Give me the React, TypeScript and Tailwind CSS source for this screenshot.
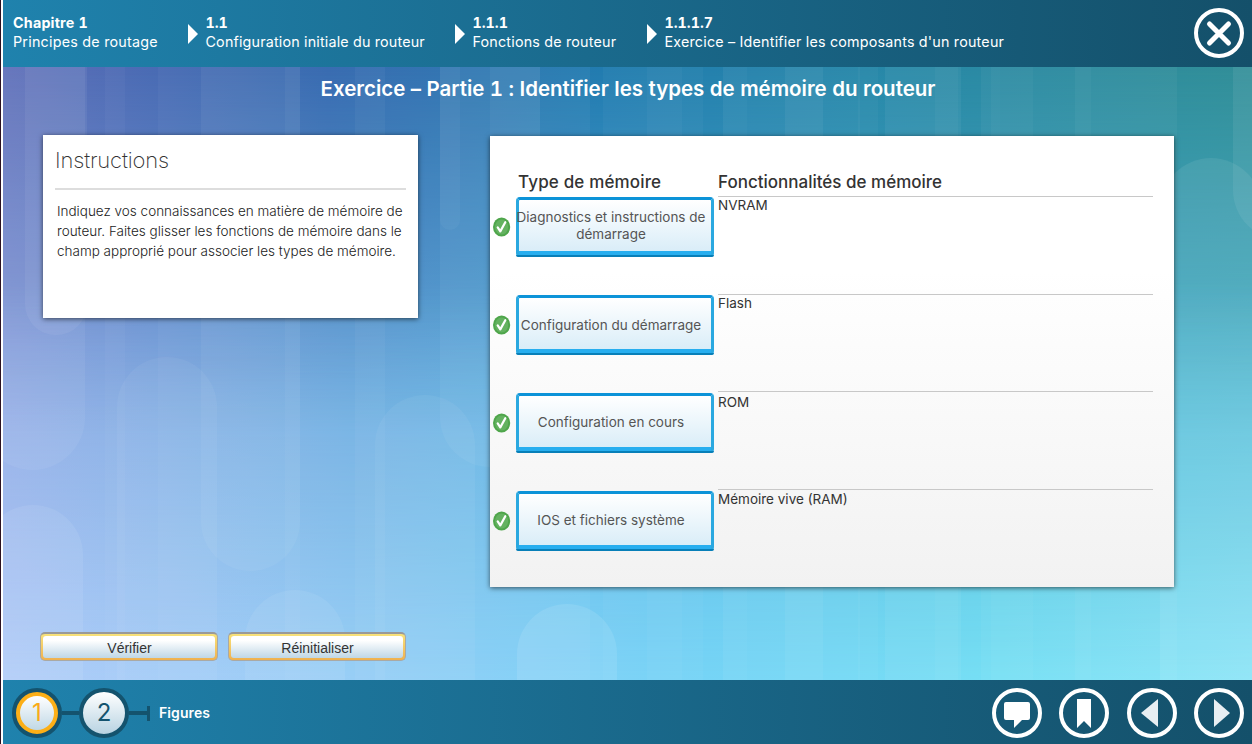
import type { ReactNode } from 'react';

const crumbs = [
  { title: 'Chapitre 1', label: 'Principes de routage', box: 'w-[192.5px]', t: 'tracking-[0.2px]', s: 'tracking-[0.24px]' },
  { title: '1.1', label: 'Configuration initiale du routeur', box: 'w-[267px]', t: 'tracking-[0px]', s: 'tracking-[0.18px]' },
  { title: '1.1.1', label: 'Fonctions de routeur', box: 'w-[192px]', t: 'tracking-[0px]', s: 'tracking-[0.2px]' },
  { title: '1.1.1.7', label: "Exercice – Identifier les composants d'un routeur", box: 'w-[400px]', t: 'tracking-[0px]', s: 'tracking-[0.2px]' },
];

const rows = [
  { card: 'Diagnostics et instructions de démarrage', type: 'NVRAM', pad: 'pt-[1px]', shift: 'pt-0' },
  { card: 'Configuration du démarrage', type: 'Flash', pad: 'pt-[4px]', shift: 'pt-0' },
  { card: 'Configuration en cours', type: 'ROM', pad: 'pt-[2px]', shift: 'pt-[2px]' },
  { card: 'IOS et fichiers système', type: 'Mémoire vive (RAM)', pad: 'pt-[2px]', shift: 'pt-[1px]' },
];

const pillars = [
  [25, -100, 62, 435, 0.06], [105, -100, 20, 900, 0.03], [158, -100, 142, 1000, 0.03],
  [-20, -100, 105, 570, 0.06], [201, -100, 99, 671, 0.05], [285, -100, 100, 1000, 0.04],
  [117, 357, 100, 600, 0.05], [245, 590, 100, 300, 0.07], [375, 395, 100, 600, 0.05],
  [440, -100, 100, 567, 0.05], [-17, 505, 100, 400, 0.08], [355, -100, 235, 1000, 0.04],
  [440, -100, 20, 330, 0.04], [490, -100, 50, 540, 0.04], [517, 604, 100, 300, 0.1],
  [603, -100, 100, 1000, 0.03], [647, -100, 35, 1000, 0.03], [723, -100, 24, 1000, 0.05],
  [747, -100, 113, 1000, 0.03], [785, -100, 38, 1000, 0.05], [858, -100, 20, 1000, 0.03],
  [885, -100, 76, 1000, 0.05], [935, -100, 23, 1000, 0.03], [981, -100, 19, 1000, 0.04],
  [1000, -100, 91, 1000, 0.03], [991, -100, 42, 1000, 0.03], [1075, -100, 102, 1000, 0.04],
  [1160, 158, 102, 900, 0.08], [1233, -100, 100, 340, 0.07],
];

function RoundButton({ children, label }: { children: ReactNode; label: string }) {
  return (
    <button aria-label={label} className="size-[50px] shrink-0">
      <svg viewBox="0 0 50 50" className="size-[50px]">
        <circle cx="25" cy="25" r="23" fill="none" stroke="white" strokeWidth="4" />
        {children}
      </svg>
    </button>
  );
}

function Check() {
  return (
    <svg viewBox="0 0 18 20" className="h-5 w-[18px] shrink-0">
      <ellipse cx="8.6" cy="10" rx="8.6" ry="9.6" fill="#4fa64b" />
      <ellipse cx="8.6" cy="10" rx="6.6" ry="7.6" fill="#7fc07a" opacity=".45" />
      <path d="M4.7 10.4L7.3 14.4L12.3 5.2" fill="none" stroke="white" strokeWidth="2.2" strokeLinecap="round" strokeLinejoin="round" />
    </svg>
  );
}

export default function App() {
  return (
    <div className="flex h-[744px] w-[1252px] overflow-hidden bg-white font-['Inter',sans-serif]">
      <div className="w-px bg-[#2b1020]" />
      <div className="ml-[2px] flex min-w-0 flex-1 flex-col">
        <header className="flex h-[67px] shrink-0 justify-between bg-linear-to-r from-[#1f82ad] to-[#14506a] text-[14.3px] leading-[19px] text-white">
          <nav className="flex pt-[13px] pl-[10px]">
            {crumbs.map((c, i) => (
              <div key={c.title} className={`relative ${c.box}`}>
                {i > 0 && (
                  <svg viewBox="0 0 10 20" className="absolute top-[11px] -left-[18px] h-[20px] w-[10px]">
                    <path d="M0 0L10 10L0 20Z" fill="white" />
                  </svg>
                )}
                <div className={`font-bold tabular-nums ${c.t}`}>{c.title}</div>
                <div className={`whitespace-nowrap ${c.s}`}>{c.label}</div>
              </div>
            ))}
          </nav>
          <div className="pt-2 pr-[8px]">
            <RoundButton label="Fermer">
              <path d="M15.5 16L34.5 35M34.5 16L15.5 35" stroke="white" strokeWidth="5" strokeLinecap="round" />
            </RoundButton>
          </div>
        </header>

        <main className="relative h-[613px] shrink-0 bg-[linear-gradient(90deg,#5f6fb9_0%,#3167ae_26%,#227cb0_48%,#2788a9_69%,#328f98_100%)]">
          <div className="absolute inset-0 bg-[linear-gradient(90deg,#8ea6e0_0%,#64a4d9_28%,#58b0de_50%,#4cb0d0_75%,#50b5d0_100%)] mask-[linear-gradient(180deg,transparent,black_60%)]" />
          <div className="absolute inset-0 bg-[linear-gradient(90deg,#b1ccf8_0%,#94cdf6_28%,#76d2f6_52%,#76dff4_80%,#8be4f7_100%)] mask-[linear-gradient(180deg,transparent_35%,black)]" />
          <svg viewBox="3 67 1249 613" className="absolute inset-0 h-[613px] w-[1249px]">
            {pillars.map(([x, y, w, h, o], i) => (
              <rect key={i} x={x} y={y} width={w} height={h} rx={w / 2} fill="white" opacity={o} />
            ))}
          </svg>
          <div className="relative flex h-full flex-col">
            <h1 className="h-[67px] pt-[9px] pl-[1px] text-center text-[20.5px] leading-[26px] font-semibold tracking-[-0.02px] text-white tabular-nums">Exercice – Partie 1 : Identifier les types de mémoire du routeur</h1>
            <div className="flex flex-1 justify-between pr-[78px] pl-[37px]">
              <div className="flex flex-col justify-between pb-[19px]">
                <section className="mt-px ml-[3px] h-[183px] w-[375px] bg-white px-[12px] pt-[11px] shadow-[0_1px_5px_rgba(0,0,0,0.6)]">
                  <h2 className="h-[44px] border-b-2 border-[#ddd] text-[22px] leading-[29px] font-extralight tracking-[-0.15px] text-[#333]">Instructions</h2>
                  <p className="mt-[11px] ml-[2px] text-[13.5px] leading-5 font-light whitespace-nowrap text-[#222]">
                    Indiquez vos connaissances en matière de mémoire de<br />
                    routeur. Faites glisser les fonctions de mémoire dans le<br />
                    champ approprié pour associer les types de mémoire.
                  </p>
                </section>
                <div className="flex gap-[10px]">
                  {['Vérifier', 'Réinitialiser'].map((b) => (
                    <button key={b} className="h-[29px] w-[178px] rounded-[5px] border border-t-2 border-[#a9a9a5] border-t-[#999] bg-linear-to-b from-[#f7e27a] to-[#efb14f] p-[2px]">
                      <span className="flex h-full items-center justify-center rounded-[3px] bg-linear-to-b from-white from-20% to-[#bfd7e6] pt-[2px] pl-px font-['Liberation_Sans',sans-serif] text-[14px] text-[#333]">{b}</span>
                    </button>
                  ))}
                </div>
              </div>
              <section className="mt-[2px] h-[451px] w-[684px] bg-linear-to-b from-white from-30% to-[#f2f2f2] pt-[34px] pl-[3px] shadow-[0_1px_5px_rgba(0,0,0,0.6)]">
                <div className="flex h-[26px] pl-[25px] text-[17px] leading-6 font-medium text-[#333]">
                  <h3 className="w-[200px] tracking-[0.16px]">Type de mémoire</h3>
                  <h3>Fonctionnalités de mémoire</h3>
                </div>
                {rows.map((r, i) => (
                  <div key={r.type} className="flex h-[97.7px] items-start">
                    <div className={i > 1 ? 'pt-[22px]' : 'pt-[21px]'}><Check /></div>
                    <div className={`ml-[5px] flex h-[60px] w-[198px] flex-col rounded-[4px] border-x-[3px] border-t-[3px] border-[#2aa8e0] border-t-[#0c93d8] bg-linear-to-b from-white to-[#d5ebf7] ${i > 1 ? 'mt-[2px]' : 'mt-px'}`}>
                      <span className={`-mr-[6px] -ml-[14px] flex flex-1 items-center justify-center text-center text-[13.5px] leading-[17px] text-[#555] ${r.pad}`}>{r.card}</span>
                      <span className="h-[4px] bg-[#27aeef]" />
                      <span className="-mx-[3px] h-[2px] rounded-b-[3px] bg-[#087fb8]" />
                    </div>
                    <div className={`ml-[4px] w-[435px] border-t border-[#c8c8c8] text-[13.5px] leading-[17px] text-[#333] ${r.shift}`}>{r.type}</div>
                  </div>
                ))}
              </section>
            </div>
          </div>
        </main>

        <footer className="flex h-16 items-center justify-between bg-linear-to-r from-[#1f82ad] to-[#14506a] pt-[2px] pr-[8px] pl-[9px] text-white">
          <div className="flex items-center">
            <span className="flex size-[50px] items-center justify-center rounded-full border-4 border-[#14536e] bg-[#fcaf17] p-1"><span className="flex size-[34px] items-center justify-center rounded-full bg-linear-to-b from-white to-[#c0d8e6] text-[24px] text-[#f9ab17]">1</span></span>
            <span className="h-[4px] w-[17px] bg-[#14536e]" />
            <span className="flex size-[50px] items-center justify-center rounded-full border-4 border-[#14536e] bg-linear-to-b from-white to-[#b8d3e2] text-[24px] text-[#14536e]">2</span>
            <span className="h-[4px] w-[18px] bg-[#14536e]" />
            <span className="h-[15px] w-[3px] bg-[#14536e]" />
            <span className="ml-[9px] pb-[2px] text-[14px] font-semibold tracking-[0.1px]">Figures</span>
          </div>
          <div className="flex gap-[17.5px]">
            <RoundButton label="Commentaires"><path d="M14 14H36Q38 14 38 16V30Q38 32 36 32H30L22 40V32H14Q12 32 12 30V16Q12 14 14 14Z" fill="white" /></RoundButton>
            <RoundButton label="Signet"><path d="M18 11H32V40L25 33L18 40Z" fill="white" /></RoundButton>
            <RoundButton label="Précédent"><path d="M14 25L31 11V39Z" fill="#e8eef2" /></RoundButton>
            <RoundButton label="Suivant"><path d="M20 11L36 25L20 39Z" fill="#e8eef2" /></RoundButton>
          </div>
        </footer>
      </div>
    </div>
  );
}
